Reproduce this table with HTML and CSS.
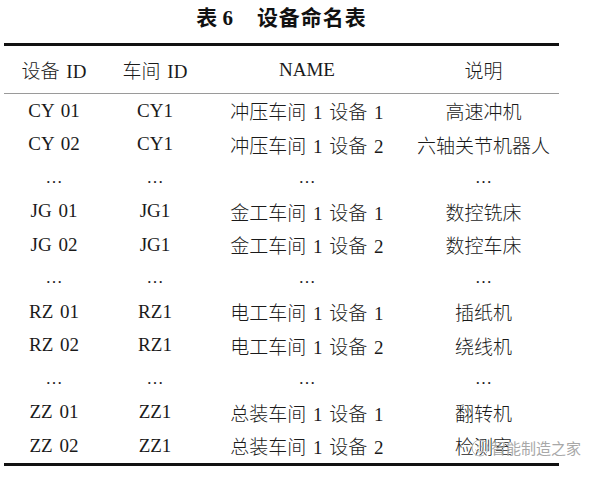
FILE: index.html
```html
<!DOCTYPE html>
<html>
<head>
<meta charset="utf-8">
<link rel="stylesheet" href="styles.css">
</head>
<body>
<div class="page">
  <div class="title">表 <span class="num">6</span><span class="name">设备命名表</span></div>
  <div class="table">
    <div class="row head"><div>设备 ID</div><div>车间 ID</div><div>NAME</div><div>说明</div></div>
    <div class="row"><div>CY 01</div><div>CY1</div><div>冲压车间 1 设备 1</div><div>高速冲机</div></div>
    <div class="row"><div>CY 02</div><div>CY1</div><div>冲压车间 1 设备 2</div><div>六轴关节机器人</div></div>
    <div class="row dots"><div>…</div><div>…</div><div>…</div><div>…</div></div>
    <div class="row"><div>JG 01</div><div>JG1</div><div>金工车间 1 设备 1</div><div>数控铣床</div></div>
    <div class="row"><div>JG 02</div><div>JG1</div><div>金工车间 1 设备 2</div><div>数控车床</div></div>
    <div class="row dots"><div>…</div><div>…</div><div>…</div><div>…</div></div>
    <div class="row"><div>RZ 01</div><div>RZ1</div><div>电工车间 1 设备 1</div><div>插纸机</div></div>
    <div class="row"><div>RZ 02</div><div>RZ1</div><div>电工车间 1 设备 2</div><div>绕线机</div></div>
    <div class="row dots"><div>…</div><div>…</div><div>…</div><div>…</div></div>
    <div class="row"><div>ZZ 01</div><div>ZZ1</div><div>总装车间 1 设备 1</div><div>翻转机</div></div>
    <div class="row"><div>ZZ 02</div><div>ZZ1</div><div>总装车间 1 设备 2</div><div>检测室</div></div>
  </div>
</div>
<div class="watermark">
  <svg class="wm-icon" width="20" height="20" viewBox="0 0 20 20"><circle cx="10" cy="10" r="8" fill="none" stroke="#bbb" stroke-width="1"/><path d="M5.5 11.5 C7 14.5 12 15 14.5 12" fill="none" stroke="#bbb" stroke-width="1"/><circle cx="8" cy="8.5" r="0.9" fill="#bbb"/><circle cx="12" cy="8.5" r="0.9" fill="#bbb"/></svg>
  <span>智能制造之家</span>
</div>
</body>
</html>
```
FILE: styles.css
```css
body {
  margin: 0;
  background: #fff;
  color: #1a1a1a;
  font-family: "Liberation Serif", "Noto Sans CJK SC", serif;
}
.page {
  width: 555px;
  margin-left: 4px;
}
.title {
  height: 43px;
  line-height: 36px;
  text-align: center;
  font-size: 21px;
  font-weight: bold;
  color: #111;
}
.title .name {
  margin-left: 24px;
  letter-spacing: 1px;
}
.table {
  border-top: 3px solid #111;
  border-bottom: 3px solid #111;
}
.row {
  display: grid;
  grid-template-columns: 100px 102px 202px 151px;
  height: 33.5px;
  align-items: center;
  text-align: center;
  font-size: 19px;
  font-weight: 300;
  word-spacing: 2px;
}
.row.head {
  height: 47px;
  border-bottom: 1.5px solid #9a9a9a;
}
.dots {
  font-size: 17px;
}
.watermark {
  position: absolute;
  left: 470px;
  top: 437px;
  display: flex;
  align-items: center;
  gap: 1px;
  color: #a8a8a8;
  font-family: "Noto Sans CJK SC", sans-serif;
  font-size: 15px;
}
.wm-icon {
  display: block;
}
```
